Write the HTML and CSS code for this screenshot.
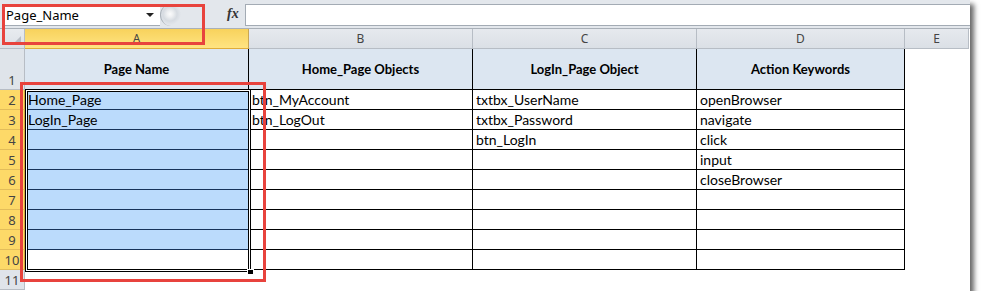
FILE: index.html
```html
<!DOCTYPE html>
<html lang="en">
<head>
    <meta charset="UTF-8">
    <title>Page Objects Sheet</title>
    <link rel="stylesheet" href="styles.css">
</head>
<body>
    <div class="window">
        <div class="formula-bar">
            <div class="name-box">
                <span>Page_Name</span>
                <span class="dd-arrow"></span>
            </div>
            <div class="splitter"></div>
            <div class="fx">fx</div>
            <div class="formula-input"></div>
        </div>

        <div class="sheet">
            <!-- column headers -->
            <div class="corner"><span class="corner-tri"></span></div>
            <div class="col-head active">A</div>
            <div class="col-head">B</div>
            <div class="col-head">C</div>
            <div class="col-head">D</div>
            <div class="col-head">E</div>

            <!-- row 1 -->
            <div class="row-head tall">1</div>
            <div class="cell head">Page Name</div>
            <div class="cell head">Home_Page Objects</div>
            <div class="cell head">LogIn_Page Object</div>
            <div class="cell head">Action Keywords</div>
            <div class="cell blank"></div>

            <div class="row-head active">2</div>
            <div class="cell sel">Home_Page</div>
            <div class="cell">btn_MyAccount</div>
            <div class="cell">txtbx_UserName</div>
            <div class="cell">openBrowser</div>
            <div class="cell blank"></div>

            <div class="row-head active">3</div>
            <div class="cell sel">LogIn_Page</div>
            <div class="cell">btn_LogOut</div>
            <div class="cell">txtbx_Password</div>
            <div class="cell">navigate</div>
            <div class="cell blank"></div>

            <div class="row-head active">4</div>
            <div class="cell sel"></div>
            <div class="cell"></div>
            <div class="cell">btn_LogIn</div>
            <div class="cell">click</div>
            <div class="cell blank"></div>

            <div class="row-head active">5</div>
            <div class="cell sel"></div>
            <div class="cell"></div>
            <div class="cell"></div>
            <div class="cell">input</div>
            <div class="cell blank"></div>

            <div class="row-head active">6</div>
            <div class="cell sel"></div>
            <div class="cell"></div>
            <div class="cell"></div>
            <div class="cell">closeBrowser</div>
            <div class="cell blank"></div>

            <div class="row-head active">7</div>
            <div class="cell sel"></div>
            <div class="cell"></div>
            <div class="cell"></div>
            <div class="cell"></div>
            <div class="cell blank"></div>

            <div class="row-head active">8</div>
            <div class="cell sel"></div>
            <div class="cell"></div>
            <div class="cell"></div>
            <div class="cell"></div>
            <div class="cell blank"></div>

            <div class="row-head active">9</div>
            <div class="cell sel"></div>
            <div class="cell"></div>
            <div class="cell"></div>
            <div class="cell"></div>
            <div class="cell blank"></div>

            <div class="row-head active">10</div>
            <div class="cell"></div>
            <div class="cell"></div>
            <div class="cell"></div>
            <div class="cell"></div>
            <div class="cell blank"></div>

            <div class="row-head">11</div>
            <div class="cell blank"></div>
            <div class="cell blank"></div>
            <div class="cell blank"></div>
            <div class="cell blank"></div>
            <div class="cell blank"></div>
        </div>

        <!-- selection frame around A2:A10 -->
        <div class="selection"><span class="fill-handle"></span></div>

        <!-- red callout boxes -->
        <div class="callout callout-name"></div>
        <div class="callout callout-col"></div>
    </div>
</body>
</html>
```

FILE: styles.css
```css
body {
    margin: 0;
    background-color: #fff;
    font-family: Lato, "Liberation Sans", sans-serif;
}
.window {
    position: relative;
    width: 970px;
    height: 291px;
    background-color: #fff;
    box-shadow: 4px 4px 5px rgba(0,0,0,0.6);
    overflow: visible;
}

/* formula bar */
.formula-bar {
    display: flex;
    align-items: flex-start;
    box-sizing: border-box;
    height: 29px;
    padding: 4px 0 0 3px;
    background-color: #e3e7ec;
    border-bottom: 1px solid #a9b0b8;
}
.name-box {
    display: flex;
    align-items: center;
    justify-content: space-between;
    box-sizing: border-box;
    width: 157px;
    height: 22px;
    padding: 0 6px 0 3px;
    background-color: #fff;
    border-top: 1px solid #a3abb4;
    border-bottom: 1px solid #a3abb4;
    font-family: "Noto Sans", sans-serif;
    font-size: 13px;
    color: #000;
}
.dd-arrow {
    width: 0;
    height: 0;
    border-top: 4px solid #222;
    border-left: 4px solid transparent;
    border-right: 4px solid transparent;
}
.splitter {
    box-sizing: border-box;
    width: 22px;
    height: 22px;
    border-radius: 11px 0 0 11px;
    border-left: 1px solid #a9b0b8;
    background: radial-gradient(circle at 9px 10px, #fbfbfc 0, #eef0f2 3px, #d6dbe1 7px, #e3e7ec 11px);
}
.fx {
    width: 18px;
    margin-left: 45px;
    padding-top: 2px;
    font-family: "Liberation Serif", serif;
    font-style: italic;
    font-weight: bold;
    font-size: 14px;
    color: #333;
}
.formula-input {
    flex: 1;
    box-sizing: border-box;
    height: 22px;
    background-color: #fff;
    border: 1px solid #a3abb4;
    border-right: none;
}

/* grid */
.sheet {
    display: grid;
    grid-template-columns: 25px 224px 224px 224px 208px 64px;
    grid-template-rows: 20px 41px repeat(10, 20px);
}
.corner,
.col-head,
.row-head {
    box-sizing: border-box;
    background-color: #dfe4ea;
    border-right: 1px solid #b7bdc5;
    border-bottom: 1px solid #b7bdc5;
    font-family: "Noto Sans", sans-serif;
    font-size: 12px;
    color: #444;
}
.corner {
    position: relative;
    background: linear-gradient(#e8ebef, #dce1e7);
}
.corner-tri {
    position: absolute;
    right: 3px;
    bottom: 3px;
    width: 0;
    height: 0;
    border-bottom: 9px solid #b9bec5;
    border-left: 9px solid transparent;
}
.col-head {
    display: flex;
    align-items: center;
    justify-content: center;
    background: linear-gradient(#e6e9ee, #dbe0e6);
}
.col-head.active {
    background: linear-gradient(#f8d25c, #ffe482);
    border-bottom-color: #e0ac3a;
    border-right-color: #c8a655;
}
.row-head {
    display: flex;
    align-items: flex-end;
    justify-content: center;
    padding-bottom: 1px;
    font-size: 13px;
    line-height: 16px;
}
.row-head.active {
    background-color: #fdd968;
    border-bottom-color: #e3bd5a;
    border-right-color: #d5a53d;
}
.cell {
    box-sizing: border-box;
    padding: 0 3px;
    border-right: 1px solid #000;
    border-bottom: 1px solid #000;
    font-size: 14px;
    line-height: 19px;
    color: #000;
    white-space: nowrap;
    overflow: hidden;
}
.cell.head {
    display: flex;
    align-items: center;
    justify-content: center;
    background-color: #dce6f1;
    font-weight: bold;
    font-size: 13px;
}
.cell.sel {
    background-color: #bbdbfc;
    border-bottom-color: #17335a;
}
.cell.blank {
    border: none;
}

/* selection frame */
.selection {
    position: absolute;
    left: 25px;
    top: 89px;
    width: 226px;
    height: 183px;
    box-sizing: border-box;
    border: 1px solid #000;
    box-shadow: inset 0 0 0 1px #fff, inset 0 0 0 2px #000;
}
.fill-handle {
    position: absolute;
    right: -4px;
    bottom: -4px;
    width: 5px;
    height: 4px;
    background-color: #000;
    border: 1px solid #fff;
}

/* callouts */
.callout {
    position: absolute;
    box-sizing: border-box;
    border: 3px solid #e8433d;
}
.callout-name {
    left: 2px;
    top: 4px;
    width: 203px;
    height: 41px;
}
.callout-col {
    left: 20px;
    top: 82px;
    width: 246px;
    height: 200px;
}
```
